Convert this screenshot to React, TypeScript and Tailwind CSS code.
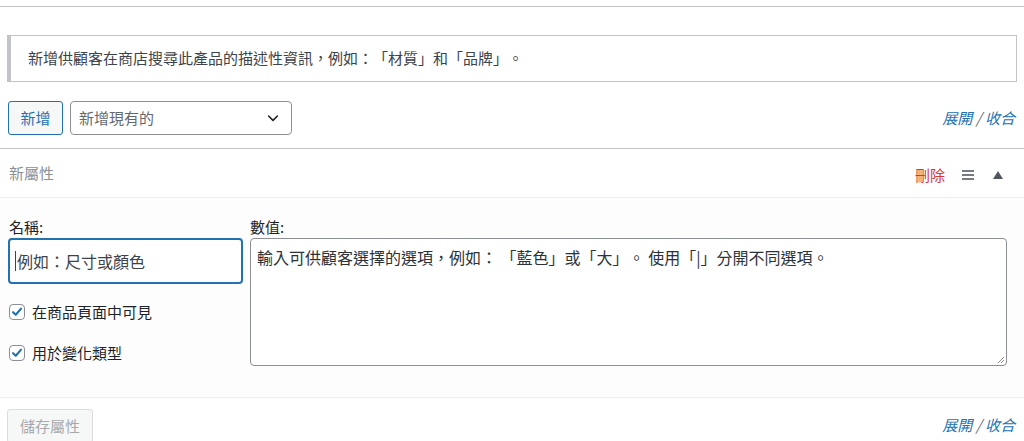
import React from "react";

const font = { fontFamily: '"Noto Sans CJK TC", "Noto Sans", sans-serif' };

function Check() {
  return (
    <span className="flex h-[16px] w-[16px] items-center justify-center rounded-[4px] border border-[#8c8f94] bg-white">
      <svg viewBox="0 0 16 16" className="h-[14px] w-[14px]">
        <path d="M3.5 8.2 L6.6 11.2 L12.6 4.2" fill="none" stroke="#2271b1" strokeWidth="2.4" strokeLinecap="round" strokeLinejoin="round" />
      </svg>
    </span>
  );
}

function ExpandLinks() {
  return (
    <div className="text-[15px] italic text-[#2271b1]">
      <span>展開</span>
      <span className="text-[#646970]"> / </span>
      <span>收合</span>
    </div>
  );
}

export default function App() {
  return (
    <div className="h-[441px] w-[1024px] overflow-hidden bg-white text-[#3c434a] [text-spacing-trim:space-all]" style={font}>
      <div className="h-[7px] border-b border-[#c3c4c7]" />
      <div className="mx-[7px] mt-[28px] flex h-[47px] items-center border border-l-4 border-[#c3c4c7] bg-white pl-[17px] text-[15px] text-[#3c434a]">
        新增供顧客在商店搜尋此產品的描述性資訊，例如：「材質」和「品牌」。
      </div>
      <div className="mt-[19px] flex items-center justify-between pl-[8px] pr-[9px]">
        <div className="flex items-center gap-[7px]">
          <button className="flex h-[34px] w-[55px] items-center justify-center rounded-[3px] border border-[#2271b1] bg-[#f6f7f7] text-[15px] text-[#2271b1]">
            新增
          </button>
          <div className="flex h-[34px] w-[222px] items-center justify-between rounded-[4px] border border-[#8c8f94] bg-white pl-[8px] pr-[10px] text-[15px] text-[#646970]">
            <span>新增現有的</span>
            <svg viewBox="0 0 20 20" className="h-[16px] w-[16px]">
              <path d="M4.5 7.5 L10 13 L15.5 7.5" fill="none" stroke="#1d2327" strokeWidth="2" strokeLinecap="round" strokeLinejoin="round" />
            </svg>
          </div>
        </div>
        <ExpandLinks />
      </div>
      <div className="mt-[13px] border-t border-[#c3c4c7]">
        <div className="flex h-[49px] items-center justify-between border-b border-[#eeeeee] pl-[9px] pr-[21px]">
          <span className="text-[15px] text-[#8c8f94]">新屬性</span>
          <div className="mt-[4px] flex items-center">
            <span className="text-[15px] text-[#d63638]">刪除</span>
            <svg viewBox="0 0 12 10" className="ml-[17px] h-[10px] w-[12px]">
              <rect x="0" y="0" width="12" height="2" fill="#787c82" />
              <rect x="0" y="4" width="12" height="2" fill="#787c82" />
              <rect x="0" y="8" width="12" height="2" fill="#787c82" />
            </svg>
            <svg viewBox="0 0 10 8" className="ml-[19px] h-[8px] w-[10px]">
              <path d="M5 0 L10 8 L0 8 Z" fill="#50575e" />
            </svg>
          </div>
        </div>
        <div className="flex h-[200px] gap-[7px] border-b border-[#eeeeee] bg-[#fdfdfd] pl-[8px] pr-[17px] pt-[19px]">
          <div className="flex w-[235px] flex-col">
            <label className="pl-[1px] text-[15px] leading-[20px] text-[#1d2327]">名稱:</label>
            <div className="mt-[1px] flex h-[46px] items-center rounded-[4px] border-2 border-[#2271b1] bg-white pl-[5px] text-[16px] text-[#3c434a]">
              <span className="mr-[1px] h-[20px] w-[1px] bg-[#3c434a]" />
              例如：尺寸或顏色
            </div>
            <label className="mt-[17px] flex items-center gap-[7px] pl-[1px] text-[15px] text-[#1d2327]">
              <Check />
              在商品頁面中可見
            </label>
            <label className="mt-[18px] flex items-center gap-[7px] pl-[1px] text-[15px] text-[#1d2327]">
              <Check />
              用於變化類型
            </label>
          </div>
          <div className="flex flex-1 flex-col">
            <label className="text-[15px] leading-[20px] text-[#1d2327]">數值:</label>
            <div className="relative mt-[1px] h-[128px] rounded-[4px] border border-[#8c8f94] bg-white px-[6px] pt-[6px] text-[16px] text-[#2c3338]">
              輸入可供顧客選擇的選項，例如： 「藍色」或「大」。 使用「|」分開不同選項。
              <svg viewBox="0 0 8 8" className="absolute bottom-[1px] right-[1px] h-[8px] w-[8px]">
                <path d="M1 7 L7 1 M4 7 L7 4" stroke="#8c8f94" strokeWidth="1" />
              </svg>
            </div>
          </div>
        </div>
        <div className="flex items-start justify-between pl-[7px] pr-[9px] pt-[11px]">
          <button className="flex h-[34px] w-[86px] items-center justify-center rounded-[3px] border border-[#dcdcde] bg-[#f6f7f7] text-[15px] text-[#a7aaad]">
            儲存屬性
          </button>
          <div className="mt-[5px]">
            <ExpandLinks />
          </div>
        </div>
      </div>
    </div>
  );
}
